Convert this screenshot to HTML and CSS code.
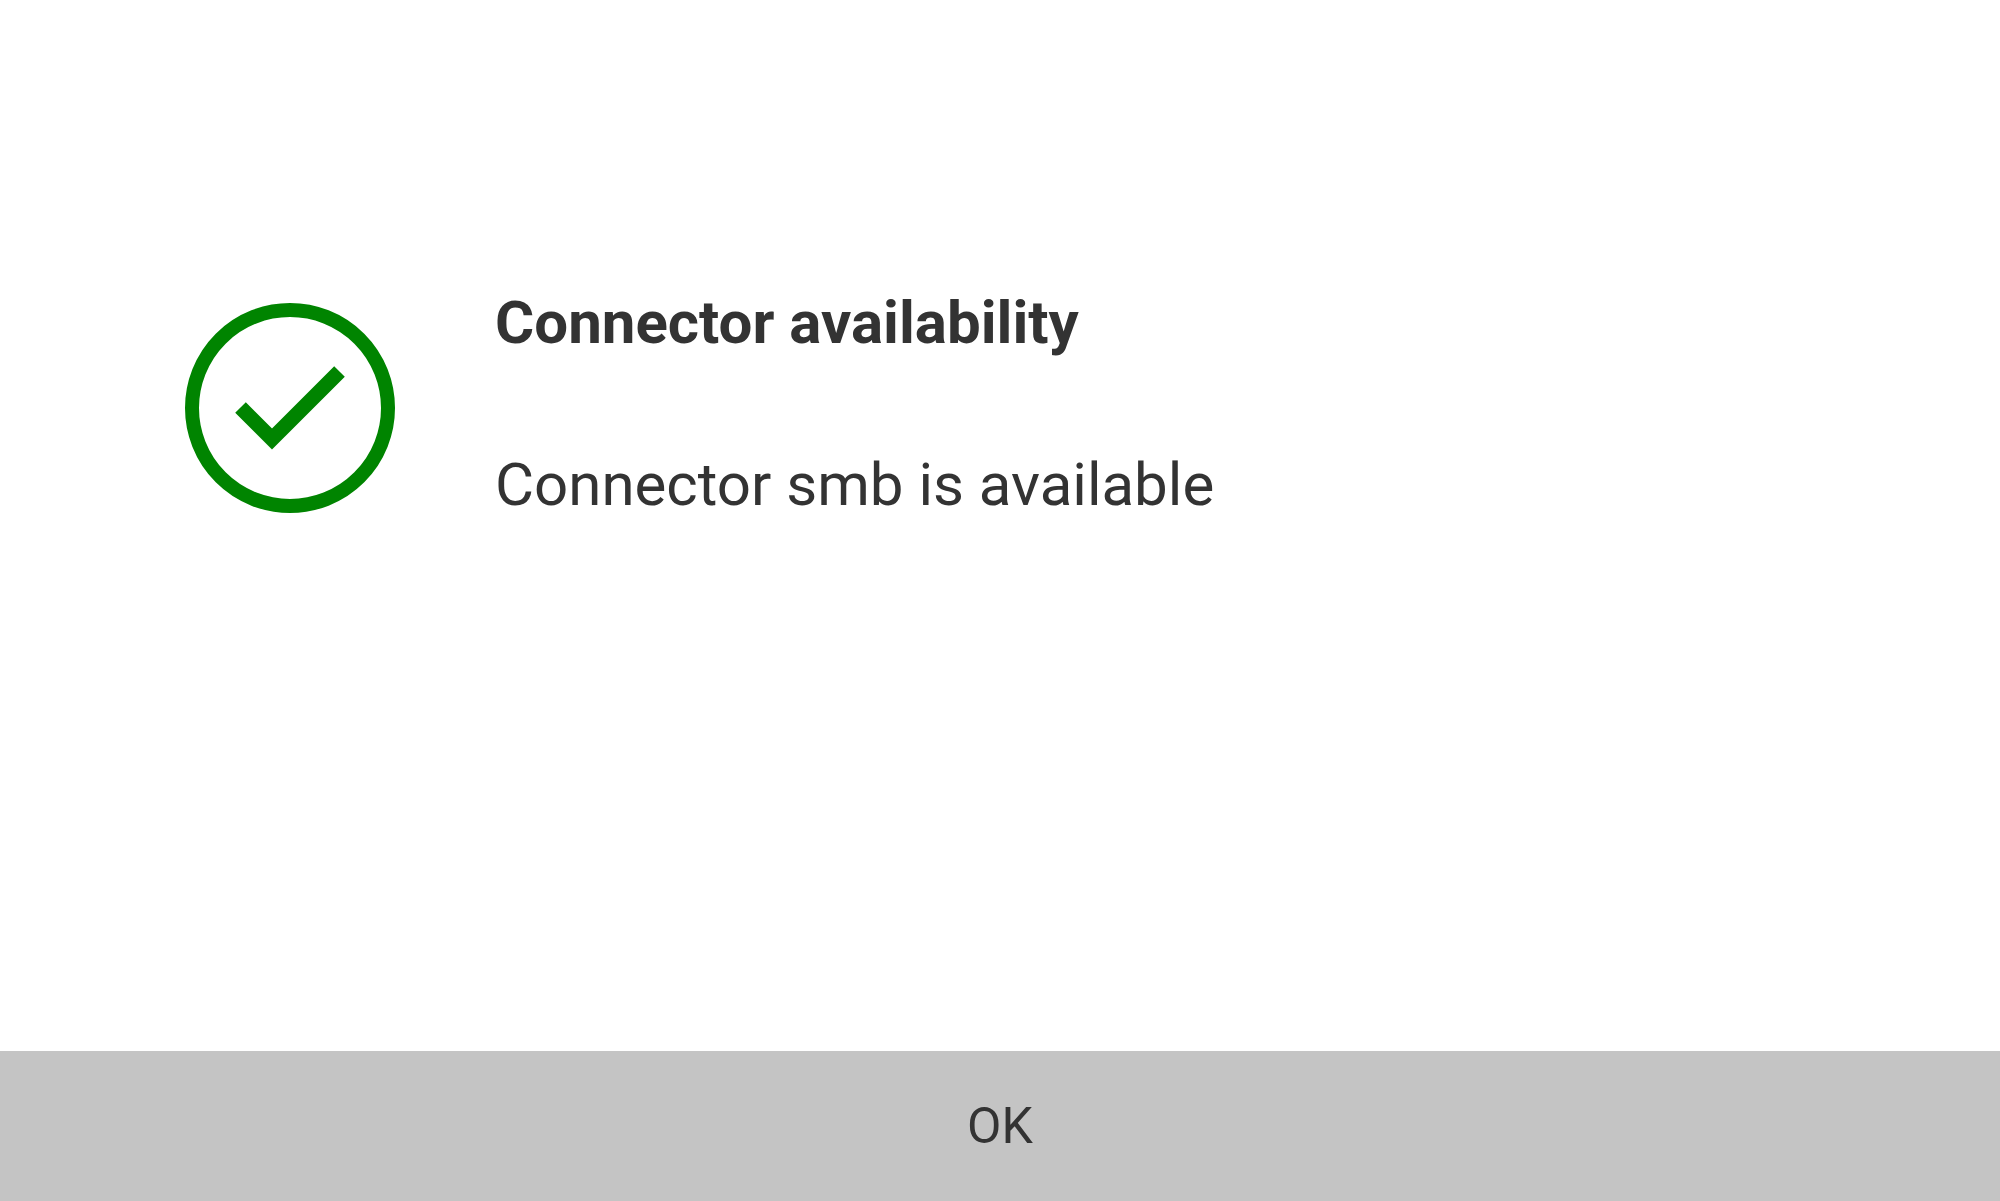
FILE: index.html
```html
<!DOCTYPE html>
<html lang="en">
<head>
    <meta charset="UTF-8">
    <title>Connector availability</title>
    <link rel="stylesheet" href="styles.css">
</head>
<body>
<div class="dialog" role="alertdialog" aria-labelledby="title" aria-describedby="message">
    <div class="content">
        <svg class="icon" viewBox="0 0 210 210" aria-hidden="true">
            <circle cx="105" cy="105" r="98"/>
            <path d="M55.5 104.5L87 136L154.5 68.5"/>
        </svg>
        <div class="text">
            <h1 id="title">Connector availability</h1>
            <p id="message">Connector smb is available</p>
        </div>
    </div>
    <button type="button" class="ok">OK</button>
</div>
</body>
</html>
```

FILE: styles.css
```css
*{margin: 0;padding: 0;box-sizing: border-box;}
body{background: #fff;color: #333;font-family: Roboto, "Liberation Sans", sans-serif;}
.dialog{display: flex;flex-direction: column;min-height: 100vh;}
.content{display: flex;flex: 1;align-items: flex-start;gap: 100px;padding: 282px 185px 0;}
.icon{flex: none;width: 210px;height: 210px;margin-top: 21px;fill: none;stroke: #008400;stroke-width: 14px;}
.icon path{stroke-width: 15px;}
.text{flex: 1;font-size: 60px;line-height: 81px;}
.text h1{font-size: 60px;font-weight: 700;margin-bottom: 81px;}
.ok{width: 100%;height: 150px;border: 0;background: #c4c4c4;color: #333;font-family: inherit;font-size: 50px;cursor: pointer;}
```
